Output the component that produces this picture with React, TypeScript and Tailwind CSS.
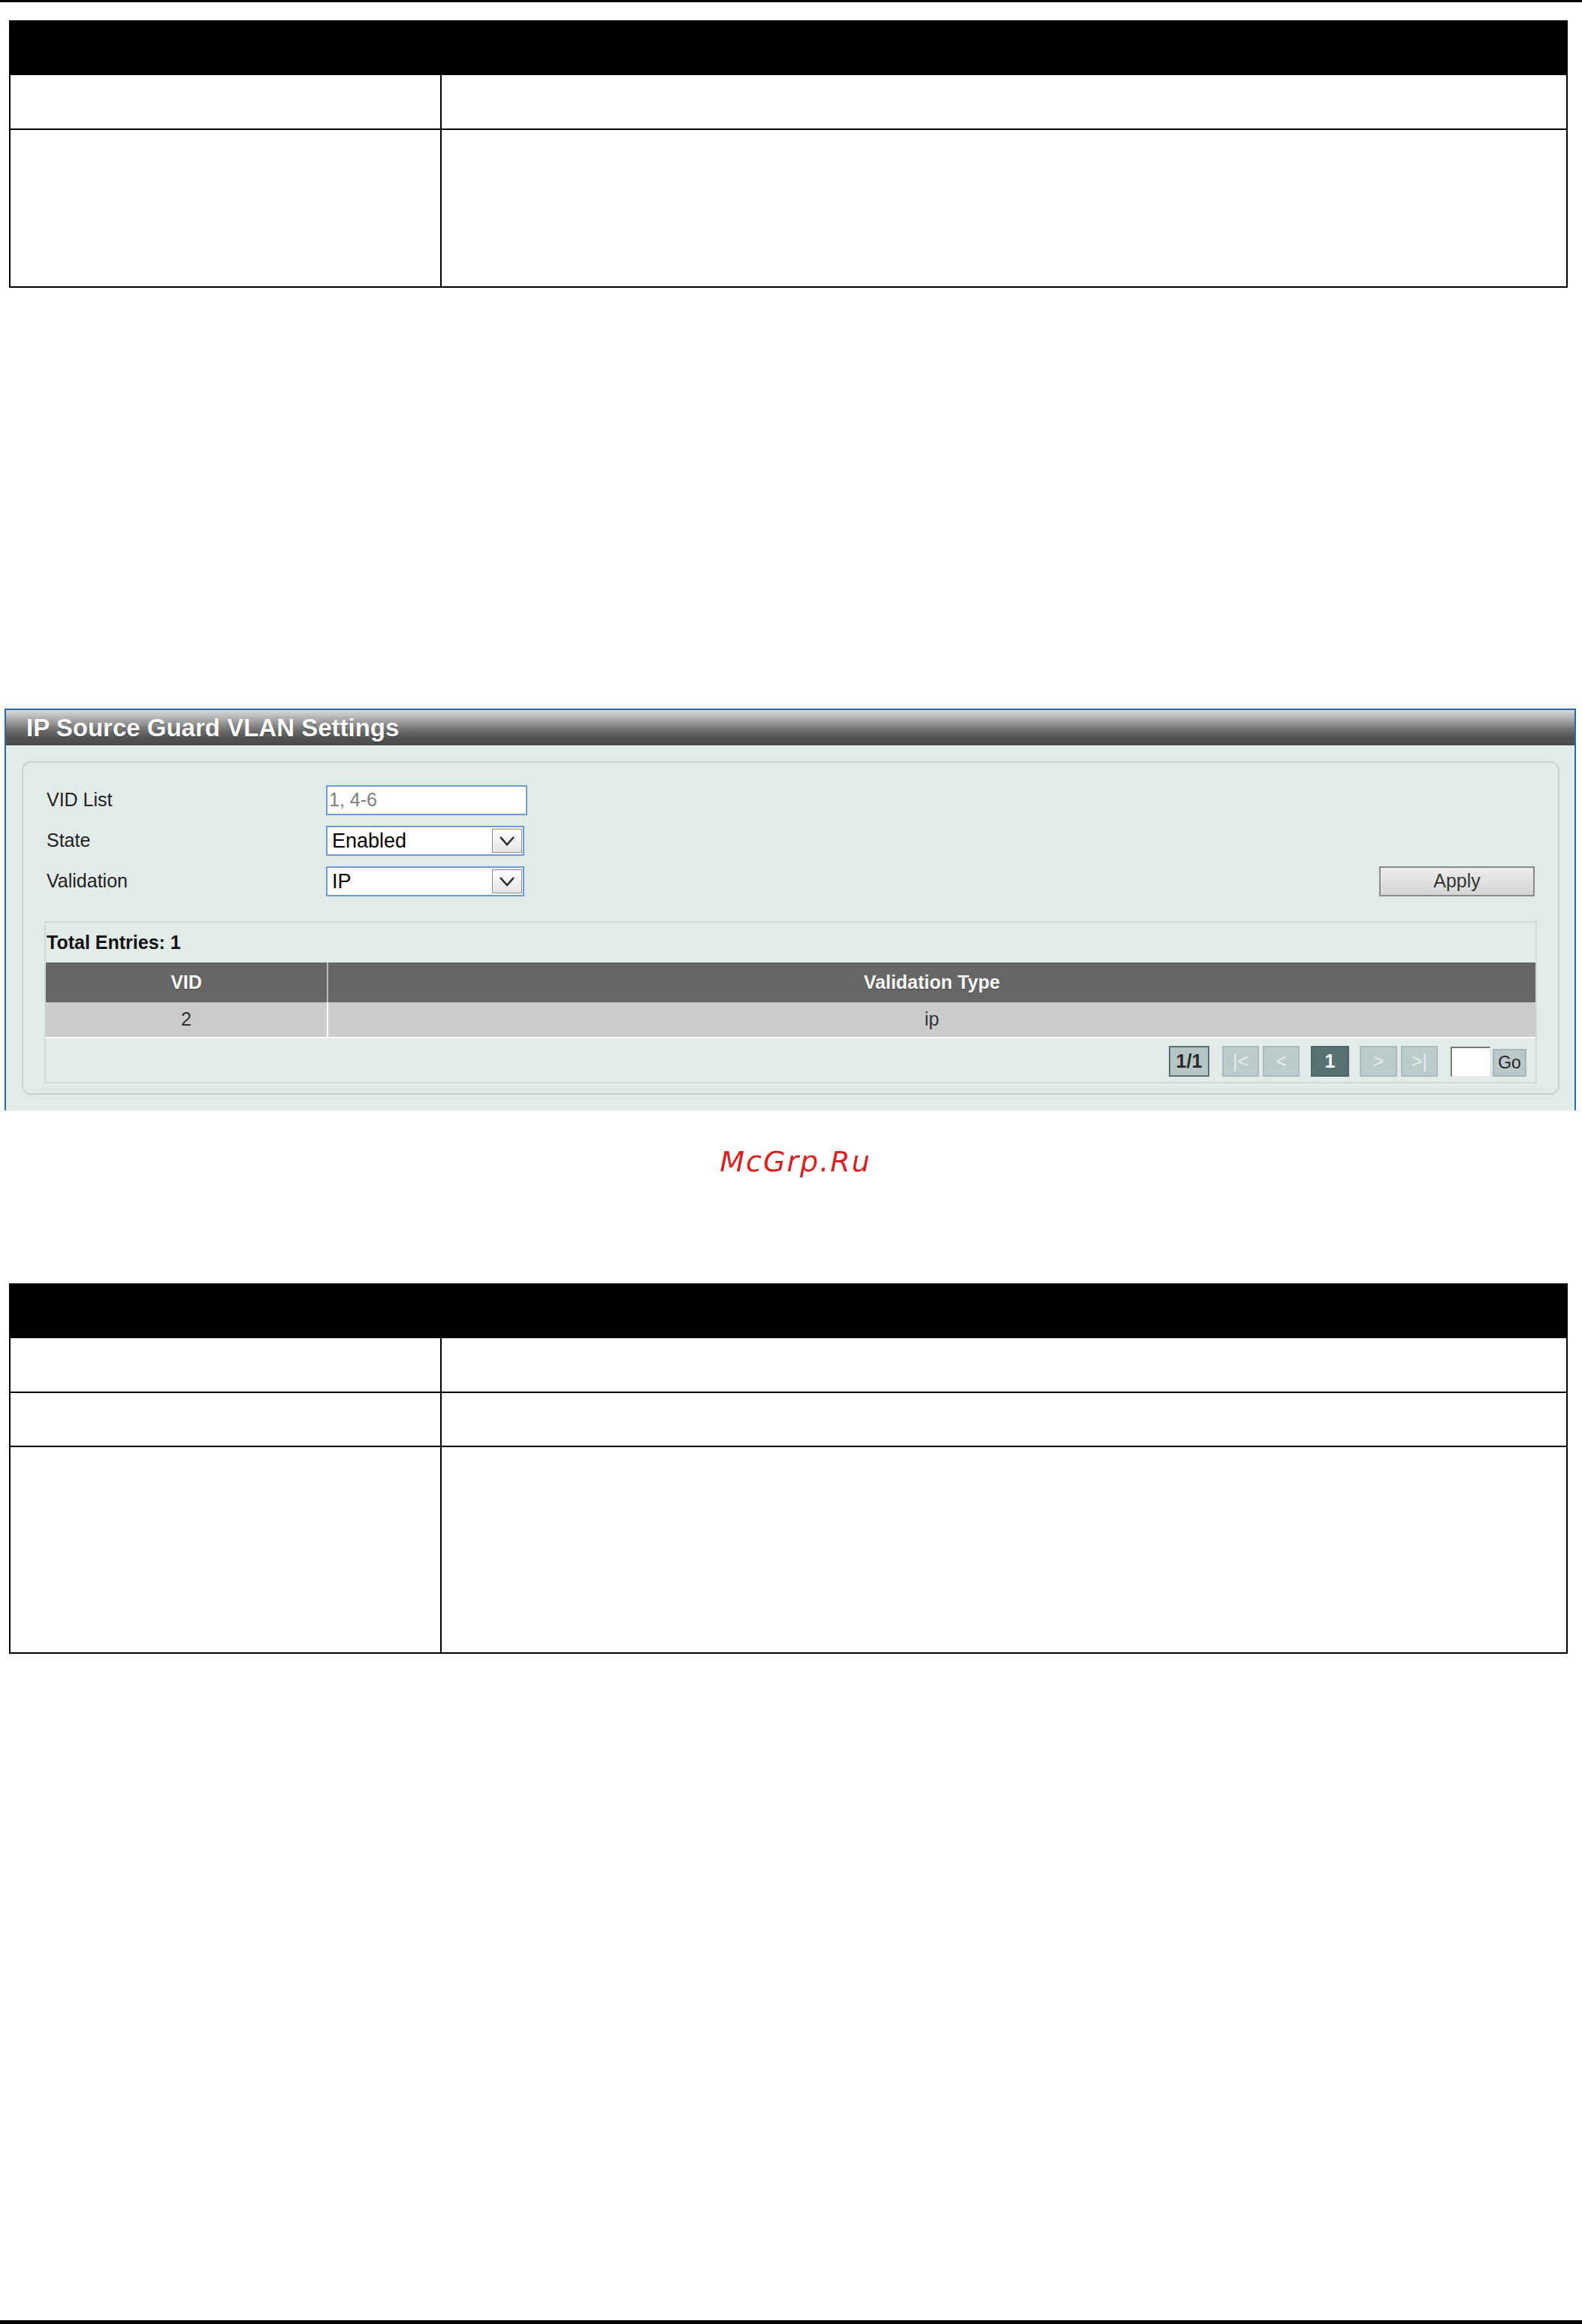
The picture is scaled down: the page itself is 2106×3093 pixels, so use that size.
import React from "react";

const SANS = "font-['Liberation_Sans',Arial,sans-serif]";

// Empty manual-style parameter table (black header, two columns)
function SpecTable({ rows, className }: { rows: string[]; className: string }) {
	return (
		<div className={`ml-[12px] w-[2075px] ${className}`}>
			<div className="h-[73px] bg-black" />
			{rows.map((h, i) => (
				<div key={i} className={`flex border-x-2 border-b-2 border-black ${h}`}>
					<div className="w-[574px] border-r-2 border-black" />
					<div className="flex-1" />
				</div>
			))}
		</div>
	);
}

function Chevron() {
	return (
		<svg width="22" height="14" viewBox="0 0 22 14">
			<polyline points="2,2 11,12 20,2" fill="none" stroke="#2a2a2a" strokeWidth="2.6" />
		</svg>
	);
}

function Select({ value }: { value: string }) {
	return (
		<div className="flex h-[40px] w-[264px] items-center border-2 border-[#6b9fd3] bg-white">
			<span className="pl-[6px] text-[27px] leading-none text-black">{value}</span>
			<div className="mr-[1px] ml-auto flex h-[32px] w-[40px] items-center justify-center border border-[#8a8a8a] bg-[linear-gradient(to_bottom,#ffffff,#e4e4e4)]">
				<Chevron />
			</div>
		</div>
	);
}

function PageBox({ children, className }: { children: React.ReactNode; className: string }) {
	return (
		<div className={`flex h-[41px] items-center justify-center border-2 text-[25px] leading-none ${className}`}>
			{children}
		</div>
	);
}

function Panel() {
	const disabled = "w-[49px] bg-[#bccbcb] border-[#aab9b9] text-[#e4ecec]";
	return (
		<div className={`mt-[560px] ml-[6px] w-[2092px] border-x-2 border-t-2 border-[#2a6aa5] ${SANS}`}>
			<div className="flex h-[47px] items-center bg-[linear-gradient(to_bottom,#d8d8d8_0%,#a9a9a9_28%,#6c6c6c_58%,#505050_82%,#4a4a4a_100%)] pl-[27px]">
				<span className="text-[33px] leading-none font-bold text-white [text-shadow:0_1px_1px_rgba(0,0,0,0.45)]">
					IP Source Guard VLAN Settings
				</span>
			</div>
			<div className="bg-[#e2ebea] px-[20px] pt-[21px] pb-[21px] pl-[21px]">
				<div className="rounded-[12px] border-2 border-[#c8d5d5] px-[28px] pt-[30px] pb-[13px]">
					<div className="flex flex-col gap-[14px] px-[3px] text-[25px] text-[#222]">
						<div className="flex h-[40px] items-center">
							<span className="w-[372px]">VID List</span>
							<div className="flex h-[40px] w-[268px] items-center border-2 border-[#6b9fd3] bg-white pl-[2px] text-[25px] text-[#808080]">
								1, 4-6
							</div>
						</div>
						<div className="flex h-[40px] items-center">
							<span className="w-[372px]">State</span>
							<Select value="Enabled" />
						</div>
						<div className="flex h-[40px] items-center">
							<span className="w-[372px]">Validation</span>
							<Select value="IP" />
							<button className="ml-auto flex h-[40px] w-[207px] items-center justify-center border-2 border-[#8a8a8a] bg-[linear-gradient(to_bottom,#ececec,#d6d6d6)] text-[25px] text-[#333]">
								Apply
							</button>
						</div>
					</div>

					<div className="mt-[33px] border-2 border-[#d0d7d7]">
						<div className="flex h-[53px] items-center pl-[1px] text-[25px] font-bold text-[#111]">
							Total Entries: 1
						</div>
						<div className="flex h-[53px] bg-[#666666] text-[25px] font-bold text-white [text-shadow:0_1px_1px_rgba(0,0,0,0.35)]">
							<div className="flex w-[376px] items-center justify-center border-r-2 border-[#bdbdbd]">VID</div>
							<div className="flex flex-1 items-center justify-center">Validation Type</div>
						</div>
						<div className="flex h-[48px] border-b-2 border-white bg-[#cccccc] text-[25px] text-[#333]">
							<div className="flex w-[376px] items-center justify-center border-r-2 border-white">2</div>
							<div className="flex flex-1 items-center justify-center">ip</div>
						</div>
						<div className="flex h-[58px] items-start justify-end pt-[10px] pr-[12px]">
							<div className="flex items-end">
								<PageBox className="w-[54px] bg-[#b6c6c6] border-[#587070] font-bold text-[#2a2a2a]">1/1</PageBox>
								<PageBox className={`ml-[17px] ${disabled}`}>|&lt;</PageBox>
								<PageBox className={`ml-[5px] ${disabled}`}>&lt;</PageBox>
								<PageBox className="ml-[15px] w-[51px] bg-[#577070] border-[#4d6666] font-bold text-white">1</PageBox>
								<PageBox className="ml-[14px] w-[50px] bg-[#bccbcb] border-[#aab9b9] text-[#e4ecec]">&gt;</PageBox>
								<PageBox className={`ml-[5px] ${disabled}`}>&gt;|</PageBox>
								<div className="ml-[17px] h-[40px] w-[53px] border-t-2 border-l-2 border-r border-b border-t-[#7a7a7a] border-l-[#7a7a7a] border-r-[#e8e8e8] border-b-[#e8e8e8] bg-white" />
								<div className="ml-[3px] flex h-[37px] w-[45px] items-center justify-center border-2 border-[#a7b7b7] bg-[#b9c9c9] text-[23px] leading-none text-[#222]">
									Go
								</div>
							</div>
						</div>
					</div>
				</div>
			</div>
		</div>
	);
}

export default function App() {
	return (
		<div className="flex h-[3093px] w-[2106px] flex-col bg-white">
			<div className="h-[3px] bg-black" />
			<SpecTable className="mt-[24px]" rows={["h-[73px]", "h-[210px]"]} />
			<Panel />
			<div className="mt-[46px] flex h-[44px] items-center justify-center pl-[12px] font-['DejaVu_Sans',sans-serif] text-[38px] tracking-[2px] text-[#d32424] italic">
				McGrp.Ru
			</div>
			<SpecTable className="mt-[140px]" rows={["h-[73px]", "h-[72px]", "h-[275px]"]} />
			<div className="mt-auto h-[5px] bg-black" />
		</div>
	);
}
